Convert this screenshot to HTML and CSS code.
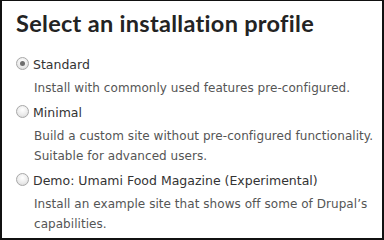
FILE: index.html
```html
<!DOCTYPE html>
<html>
<head>
<meta charset="utf-8">
<link rel="stylesheet" href="styles.css">
</head>
<body>
<div class="frame">
  <h1 class="title">Select an installation profile</h1>
  <div class="options">
    <div class="option">
      <label class="label"><span class="radio checked"></span>Standard</label>
      <div class="desc">Install with commonly used features pre-configured.</div>
    </div>
    <div class="option">
      <label class="label"><span class="radio"></span>Minimal</label>
      <div class="desc">Build a custom site without pre-configured functionality. Suitable for advanced users.</div>
    </div>
    <div class="option">
      <label class="label"><span class="radio"></span>Demo: Umami Food Magazine (Experimental)</label>
      <div class="desc">Install an example site that shows off some of Drupal’s capabilities.</div>
    </div>
  </div>
</div>
</body>
</html>
```
FILE: styles.css
```css
html, body { margin: 0; padding: 0; background: #fff; }
.frame {
  box-sizing: border-box;
  width: 384px;
  height: 240px;
  border-style: solid;
  border-color: #111;
  border-width: 1px 2px 2px 2px;
  padding: 0 0 0 14px;
  font-family: "DejaVu Sans", Verdana, sans-serif;
  overflow: hidden;
}
.title {
  margin: 8px 0 0 0;
  font-family: Lato, "DejaVu Sans", sans-serif;
  font-size: 23.5px;
  line-height: 28px;
  font-weight: bold;
  color: #232323;
  letter-spacing: 0.3px;
}
.options { margin-top: 17px; }
.label {
  display: flex;
  align-items: center;
  font-size: 12.5px;
  line-height: 22px;
  color: #333;
}
.radio {
  box-sizing: border-box;
  width: 13px;
  height: 13px;
  border-radius: 50%;
  border: 1px solid #a8a8a8;
  background: radial-gradient(circle at 50% 35%, #fff 0%, #ececec 55%, #d2d2d2 100%);
  margin: 0 4px 3px 0;
  position: relative;
}
.radio.checked::after {
  content: "";
  position: absolute;
  left: 3px; top: 3px;
  width: 5px; height: 5px;
  border-radius: 50%;
  background: #6f6f6f;
}
.desc {
  margin: 2px 0 4px 18px;
  font-size: 12px;
  line-height: 20px;
  color: #555;
  letter-spacing: 0.05px;
}
```
